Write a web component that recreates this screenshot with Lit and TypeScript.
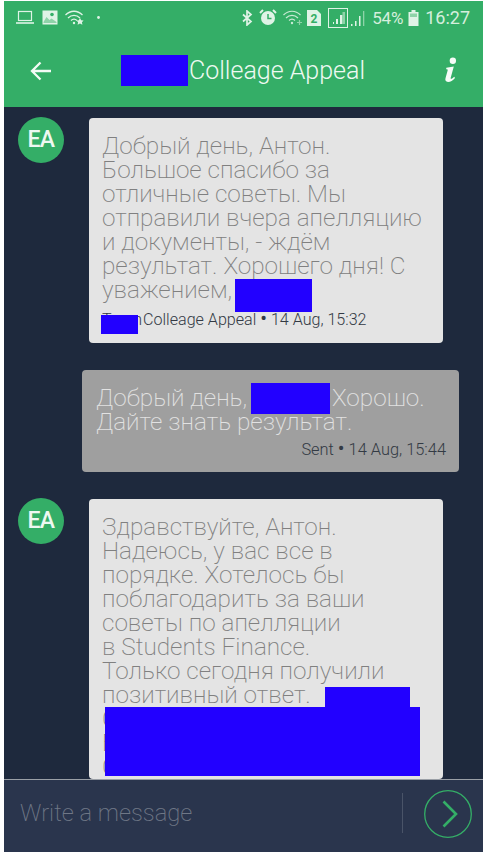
import { LitElement, html, css } from "lit";
import { customElement } from "lit/decorators.js";

@customElement("app-root")
export class AppRoot extends LitElement {
  static styles = css`
    :host { display: block; width: 483px; height: 855px; background: #fff; font-family: Roboto, "Noto Sans", sans-serif; overflow: hidden; }
    .screen { margin: 1px 0 0 4px; width: 479px; height: 851px; display: flex; flex-direction: column; background: #1e293d; }
    .top { background: #34ae67; height: 106px; flex: none; display: flex; flex-direction: column; color: #dff3e6; }
    .status { height: 33px; display: flex; align-items: center; padding: 0 13px 0 12px; }
    .status svg { display: block; flex: none; }
    .left { display: flex; align-items: center; gap: 7px; }
    .right { margin-left: auto; display: flex; align-items: center; gap: 0; }
    .pct { font-size: 17px; font-weight: 400; color: #d5eedd; margin: 0 5px 0 7px; letter-spacing: -.2px; }
    .clock { font-size: 18px; color: #d5eedd; margin-left: 6px; letter-spacing: 0; }
    .bar { flex: 1; display: flex; align-items: center; padding-left: 26px; position: relative; }
    .title { font-size: 25px; color: #eef9f2; font-weight: 300; margin-left: 137px; }
    .info { position: absolute; right: 24px; top: 23px; }
    .red { background: #2200ff; }
    .titlered { position: absolute; left: 117px; top: 21px; width: 67px; height: 31px; }
    .list { flex: 1; min-height: 0; overflow: hidden; padding: 11px 24px 0 14px; display: flex; flex-direction: column; }
    .row { display: flex; flex: none; }
    .av { width: 46px; height: 46px; border-radius: 50%; background: #34ae67; color: #eef8f1; font-size: 23px; font-weight: 500; display: flex; align-items: center; justify-content: center; flex: none; letter-spacing: -.5px; box-sizing: border-box; padding-bottom: 2px; margin-top: -1px; }
    .av2 { margin-top: 26px; }
    .bubble { position: relative; width: 354px; margin-left: 25px; background: #e4e4e4; border-radius: 4px; box-sizing: border-box; padding: 16px 13px 0; color: #808080; font-size: 24.3px; line-height: 24px; font-weight: 200; overflow: hidden; }
    .b1 { height: 225px; }
    .b3 { height: 280px; margin-top: 27px; flex: none; }
    .meta { font-size: 16.1px; line-height: 20px; color: #333a44; font-weight: 300; }
    .dot { font-size: 20px; line-height: 16px; font-weight: 400; }
    .m1 { margin: 8px 0 0; }
    .hid { display: inline-block; width: 41px; overflow: hidden; white-space: nowrap; vertical-align: bottom; }
    .r1 { position: absolute; left: 146px; top: 161px; width: 77px; height: 33px; }
    .r2 { position: absolute; left: 12px; top: 197px; width: 37px; height: 19px; }
    .sent { position: relative; flex: none; width: 377px; height: 102px; margin: 27px 0 0 64px; box-sizing: border-box; background: #9f9f9f; border-radius: 4px; padding: 16px 13px 0 14px; color: #e2e2e2; font-size: 24.3px; line-height: 24px; font-weight: 200; }
    .gap { margin-left: 79px; }
    .m2 { text-align: right; margin: 6px 0 0; font-size: 16.4px; }
    .r3 { position: absolute; left: 169px; top: 13px; width: 79px; height: 31px; }
    .r4 { position: absolute; left: 236px; top: 188px; width: 85px; height: 24px; }
    .r5 { position: absolute; left: 16px; top: 208px; width: 315px; height: 69px; }
    .foot { flex: none; height: 73px; box-sizing: border-box; border-top: 1px solid #9a9fa6; background: #2a354d; display: flex; align-items: center; padding: 0 11px 0 16px; position: relative; z-index: 1; }
    .ph { color: #6f7786; font-size: 23.7px; font-weight: 200; flex: 1; margin-top: -6px; }
    .sep { width: 1px; height: 40px; background: #4a5468; margin: -6px 21px 0 0; }
    .send { display: block; margin-top: -4px; }
  `;

  render() {
    return html`<div class="screen">
      <div class="top">
        <div class="status">
          <div class="left">
            <svg width="19" height="15" viewBox="0 0 19 15" fill="none" stroke="#dff3e6" stroke-width="1.2"><rect x="2.5" y="1.5" width="13" height="9"/><path d="M0 13h18" stroke-width="1.6"/></svg>
            <svg width="16" height="15" viewBox="0 0 16 15"><rect x="0.5" y="0.5" width="15" height="14" fill="#dff3e6"/><circle cx="10" cy="4.5" r="1.8" fill="#34ae67"/><path d="M1.5 12l3-5 3 3 2-1.5 5 3.5v1h-13z" fill="#8ed3a8"/></svg>
            <svg width="20" height="15" viewBox="0 0 20 15" fill="none" stroke="#dff3e6" stroke-width="1.3"><path d="M.5 5c5-5 12-5 17 0M3 8c3.500-3.500 8.500-3.500 12 0M6 10.500c2-1.800 4-1.800 6 0"/><circle cx="9" cy="13" r="1.200" fill="#dff3e6" stroke="none"/><path d="M15 8l1.200 2.300 2.400.3-1.700 1.700.5 2.500-2.400-1.200-2.400 1.200.5-2.500-1.700-1.700 2.400-.3z" fill="#dff3e6" stroke="none"/></svg>
            <svg style="margin-left:5px" width="3" height="3" viewBox="0 0 3 3"><circle cx="1.500" cy="1.500" r="1.400" fill="#dff3e6"/></svg>
          </div>
          <div class="right">
            <svg width="11" height="16" viewBox="0 0 11 16" fill="none" stroke="#dff3e6" stroke-width="1.700"><path d="M1 4.500l8 7-4 3.500V1l4 3.500-8 7"/></svg>
            <svg style="margin-left:6px" width="18" height="17" viewBox="0 0 18 17"><circle cx="9" cy="9" r="7" fill="#dff3e6"/><path d="M9 5v4.500h3.500" fill="none" stroke="#34ae67" stroke-width="1.500"/><path d="M1 4l3-3M17 4l-3-3" stroke="#dff3e6" stroke-width="2"/></svg>
            <svg style="margin-left:6px" width="20" height="15" viewBox="0 0 20 15" fill="none" stroke="#c9ead5" stroke-width="1.200"><path d="M.5 5c5-5 12-5 17 0M3 8c3.500-3.500 8.500-3.500 12 0M6 10.500c2-1.800 4-1.800 6 0"/><circle cx="9" cy="13" r="1.200" fill="#c9ead5" stroke="none"/><path d="M14 12.500h5M16.500 10v5" stroke="#8ed3a8"/></svg>
            <svg style="margin-left:4px" width="14" height="16" viewBox="0 0 14 16"><path d="M0 0h10l4 4v12H0z" fill="#dff3e6"/><text x="7" y="13" font-size="12" font-weight="700" text-anchor="middle" fill="#34ae67" font-family="Roboto">2</text></svg>
            <svg style="margin-left:7px" width="20" height="20" viewBox="0 0 20 20"><rect x=".5" y=".5" width="19" height="19" fill="none" stroke="#dff3e6"/><path d="M5 16v-2h1v2zM8 16v-5h2v5zM12 16V7h2.500v9z" fill="#dff3e6"/><path d="M14.500 16V4H17v12z" fill="#8ed3a8"/></svg>
            <svg style="margin-left:2px" width="15" height="16" viewBox="0 0 15 16"><path d="M1 14h1.500v2H1zM5 11h1.500v5H5zM9 6h1.500v10H9z" fill="#dff3e6"/><path d="M13 1h1.300v15H13z" fill="#8ed3a8"/></svg>
            <span class="pct">54%</span>
            <svg width="11" height="16" viewBox="0 0 11 16"><path d="M3.500 0h4v2h3v14H.5V2h3z" fill="#dff3e6"/><path d="M2 3.500h7V7H2z" fill="#8ed3a8"/></svg>
            <span class="clock">16:27</span>
          </div>
        </div>
        <div class="bar">
          <svg width="22" height="20" viewBox="0 0 22 20" fill="none" stroke="#f4fbf6" stroke-width="2.300"><path d="M21 10H2M10.500 1.500L2 10l8.500 8.500"/></svg>
          <div class="red titlered"></div>
          <span class="title">Colleage Appeal</span>
          <svg class="info" width="16" height="28" viewBox="0 0 16 30" fill="#f6fcf8"><circle cx="10" cy="4" r="3.400"/><path d="M3 11.500l8-1.300-3.300 12c-.3 1.200.3 1.500 1.200 1l2.600-2 .8 1.200c-2.400 3-4.700 4.300-7.500 4.300-2.500 0-3.300-1.500-2.700-3.800l2.300-8.400c.2-1-.2-1.400-1.600-1.300z"/></svg>
        </div>
      </div>
      <div class="list">
        <div class="row">
          <div class="av">EA</div>
          <div class="bubble b1">Добрый день, Антон.<br>Большое спасибо за<br>отличные советы. Мы<br>отправили вчера апелляцию<br>и документы, - ждём<br>результат. Хорошего дня! С<br>уважением,
            <div class="meta m1"><span class="hid">Team</span>Colleage Appeal <span class="dot">•</span> 14 Aug, 15:32</div>
            <div class="red r1"></div><div class="red r2"></div>
          </div>
        </div>
        <div class="sent">Добрый день, <span class="gap">Хорошо.</span><br>Дайте знать результат.
          <div class="meta m2">Sent <span class="dot">•</span> 14 Aug, 15:44</div>
          <div class="red r3"></div>
        </div>
        <div class="row">
          <div class="av av2">EA</div>
          <div class="bubble b3">Здравствуйте, Антон.<br>Надеюсь, у вас все в<br>порядке. Хотелось бы<br>поблагодарить за ваши<br>советы по апелляции<br>в Students Finance.<br>Только сегодня получили<br>позитивный ответ.<br>С<br>Б<br>С
            <div class="red r4"></div><div class="red r5"></div>
          </div>
        </div>
      </div>
      <div class="foot">
        <span class="ph">Write a message</span>
        <div class="sep"></div>
        <svg class="send" width="48" height="48" viewBox="0 0 48 48" fill="none" stroke="#34ae67"><circle cx="24" cy="24" r="23.300" stroke-width="1.300"/><path d="M19.500 11.500L32 24 19.500 36.500" stroke-width="2.600"/></svg>
      </div>
    </div>`;
  }
}
